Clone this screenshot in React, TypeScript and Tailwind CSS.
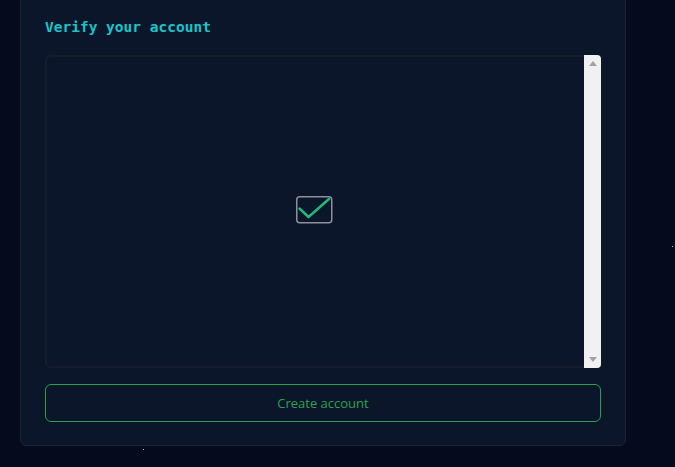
import React from "react";

export default function App() {
  return (
    <div className="relative w-[675px] h-[467px] overflow-hidden bg-[#050b1c]">
      <span className="absolute left-[143px] top-[449px] w-[1px] h-[1px] bg-[#b8c0d0]" />
      <span className="absolute left-[672px] top-[246px] w-[1px] h-[1px] bg-[#b8c0d0]" />
      <div className="ml-[20px] -mt-[8px] w-[606px] rounded-[6px] border border-[#1b2334] bg-[#0c162b] px-6 pt-6 pb-[23px]">
        <h2
          className="text-[14.5px] leading-[20px] font-bold text-[#19c5c9]"
          style={{ fontFamily: '"DejaVu Sans Mono", "Liberation Mono", monospace' }}
        >
          Verify your account
        </h2>
        <div className="mt-[18px] flex h-[313px] w-[556px]">
          <div className="flex flex-1 items-center justify-center rounded-l-[6px] border-y-2 border-l-2 border-[#151d2d] bg-[#0c162b]">
            <svg width="37" height="28" viewBox="0 0 37 28" className="-mt-[3px] -ml-[2px]">
              <rect x="0.75" y="0.75" width="35" height="26" rx="3" fill="#0c162b" stroke="#8b9099" strokeWidth="1.5" />
              <path d="M3.5 12.5 L12.5 21 L33 3" fill="none" stroke="#1fb97a" strokeWidth="2.5" strokeLinecap="round" strokeLinejoin="round" />
            </svg>
          </div>
          <div className="flex w-[17px] flex-col items-center justify-between rounded-r-[4px] bg-[#f1f1f1] py-[6px]">
            <svg width="8" height="5" viewBox="0 0 8 5">
              <path d="M0 5 L4 0 L8 5 Z" fill="#a3a3a3" />
            </svg>
            <svg width="8" height="5" viewBox="0 0 8 5">
              <path d="M0 0 L8 0 L4 5 Z" fill="#a3a3a3" />
            </svg>
          </div>
        </div>
        <button
          className="mt-4 flex h-[38px] w-[556px] items-center justify-center rounded-[6px] border-[1.5px] border-[#27a048] pt-[1px] text-[13px] text-[#2ea04f]"
          style={{ fontFamily: '"Open Sans", "Noto Sans", sans-serif' }}
        >
          Create account
        </button>
      </div>
    </div>
  );
}
